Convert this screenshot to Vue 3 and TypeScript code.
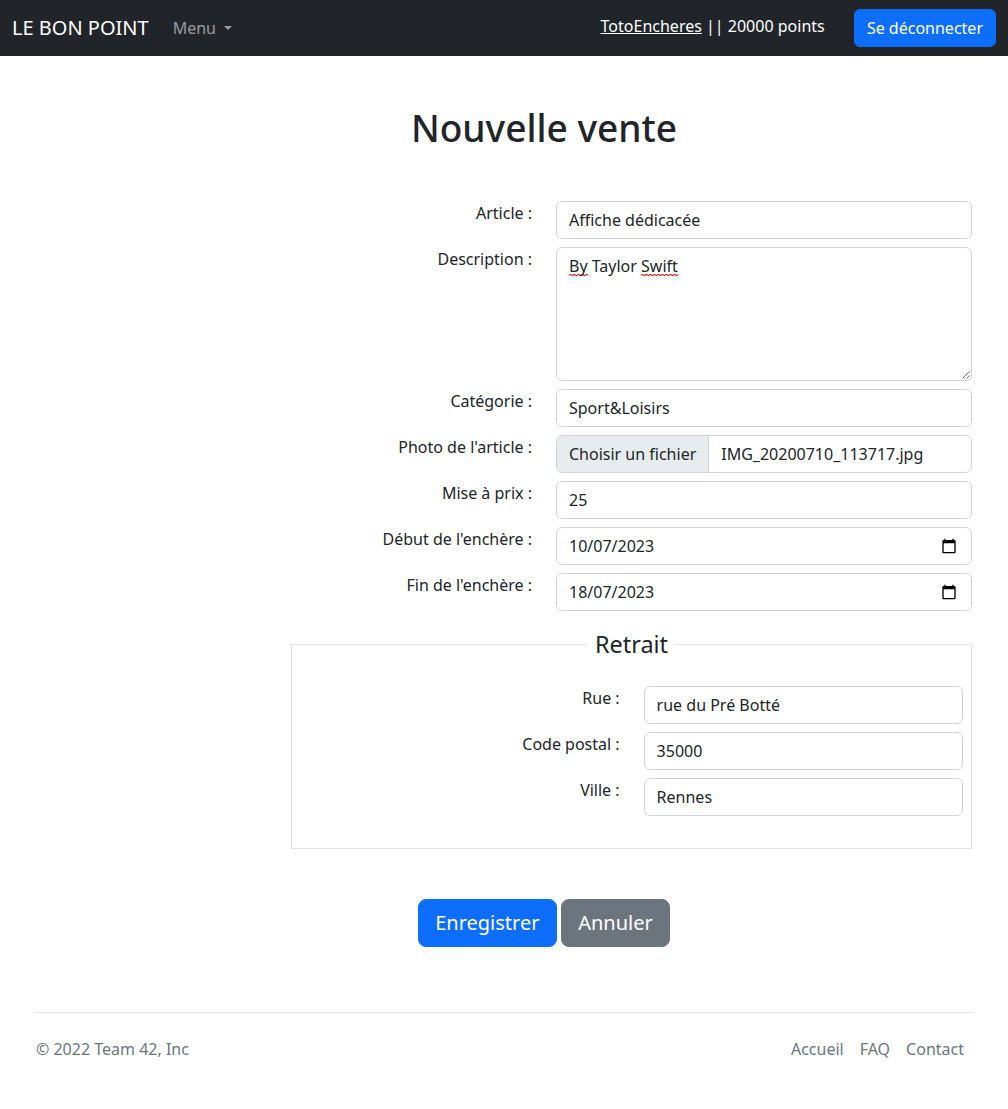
<script setup lang="ts">
interface Field {
  label: string
  value: string
  kind: 'text' | 'area' | 'file' | 'date'
}

const fields: Field[] = [
  { label: 'Article :', value: 'Affiche dédicacée', kind: 'text' },
  { label: 'Description :', value: '', kind: 'area' },
  { label: 'Catégorie :', value: 'Sport&Loisirs', kind: 'text' },
  { label: "Photo de l'article :", value: 'IMG_20200710_113717.jpg', kind: 'file' },
  { label: 'Mise à prix :', value: '25', kind: 'text' },
  { label: "Début de l'enchère :", value: '10/07/2023', kind: 'date' },
  { label: "Fin de l'enchère :", value: '18/07/2023', kind: 'date' },
]

const pickup = [
  { label: 'Rue :', value: 'rue du Pré Botté' },
  { label: 'Code postal :', value: '35000' },
  { label: 'Ville :', value: 'Rennes' },
]

const links = ['Accueil', 'FAQ', 'Contact']
</script>

<template>
  <div class="page">
    <nav class="navbar">
      <a class="brand">LE BON POINT</a>
      <a class="menu">Menu<span class="caret"></span></a>
      <span class="account"><a class="user">TotoEncheres</a> || 20000 points</span>
      <button class="btn logout">Se déconnecter</button>
    </nav>

    <main>
      <h1>Nouvelle vente</h1>
      <form>
        <div v-for="f in fields" :key="f.label" class="row">
          <label>{{ f.label }}</label>
          <div v-if="f.kind === 'area'" class="control area">
            <span class="typo">By</span> Taylor <span class="typo">Swift</span>
            <svg class="grip" width="8" height="8" viewBox="0 0 8 8">
              <path d="M0.5 7.5L7.5 0.5M4.5 7.5L7.5 4.5" stroke="#444" stroke-width="0.8" fill="none" />
            </svg>
          </div>
          <div v-else-if="f.kind === 'file'" class="control file">
            <span class="choose">Choisir un fichier</span>
            <span class="filename">{{ f.value }}</span>
          </div>
          <div v-else-if="f.kind === 'date'" class="control date">
            <span>{{ f.value }}</span>
            <svg width="16" height="16" viewBox="0 0 24 24">
              <path d="M20 3h-1V1h-2v2H7V1H5v2H4c-1.1 0-2 .9-2 2v16c0 1.1.9 2 2 2h16c1.1 0 2-.9 2-2V5c0-1.1-.9-2-2-2zm0 18H4V8h16v13z" />
            </svg>
          </div>
          <div v-else class="control">{{ f.value }}</div>
        </div>

        <fieldset>
          <legend>Retrait</legend>
          <div v-for="p in pickup" :key="p.label" class="row">
            <label>{{ p.label }}</label>
            <div class="control">{{ p.value }}</div>
          </div>
        </fieldset>
      </form>
      <div class="actions">
        <button class="btn large">Enregistrer</button>
        <button class="btn large grey">Annuler</button>
      </div>
    </main>

    <footer>
      <span>© 2022 Team 42, Inc</span>
      <div class="links"><a v-for="l in links" :key="l">{{ l }}</a></div>
    </footer>
  </div>
</template>

<style>
body {
  background: #fff;
}
</style>

<style scoped>
.page,
.page * {
  box-sizing: border-box;
}
.page {
  min-height: 1109px;
  font: 16px/24px 'Noto Sans', sans-serif;
  color: #212529;
}
.navbar {
  display: flex;
  align-items: center;
  height: 56px;
  padding: 0 12px;
  background: #212529;
  color: #fff;
}
.brand {
  font-size: 20px;
  line-height: 30px;
  margin-right: 24px;
}
.menu {
  color: rgba(255, 255, 255, 0.55);
}
.caret {
  display: inline-block;
  margin-left: 8px;
  vertical-align: 4px;
  border: 4.8px solid transparent;
  border-top-color: currentColor;
  border-bottom: 0;
}
.account {
  margin: 0 29.2px 4px auto;
}
.user {
  text-decoration: underline;
}
.btn {
  height: 38px;
  padding: 6px 12px;
  border: 1px solid #0d6efd;
  border-radius: 6px;
  background: #0d6efd;
  color: #fff;
  font: inherit;
}
.large {
  height: 48px;
  padding: 8px 16px;
  border-radius: 8px;
  font-size: 20px;
  line-height: 30px;
}
.grey {
  background: #6c757d;
  border-color: #6c757d;
}
main {
  padding: 48px 36px 0;
}
h1 {
  margin: 0 0 50px 80px;
  font-size: 37.12px;
  line-height: 47px;
  font-weight: 500;
  text-align: center;
}
form {
  margin-left: 255px;
}
.row {
  display: flex;
  margin-bottom: 8px;
}
label {
  flex: 1;
  padding-right: 24px;
  text-align: right;
}
.control {
  display: block;
  width: 416px;
  height: 38px;
  padding: 6px 12px;
  border: 1px solid #ced4da;
  border-radius: 6px;
  white-space: pre;
}
.area {
  position: relative;
  height: 134px;
  white-space: normal;
}
/* Spell-check squiggle: two one-pixel rows of offset dashes */
.typo {
  background:
    linear-gradient(90deg, #f66 1px, #f00 1px 2px, #f66 2px 3px, transparent 3px) 0 calc(100% - 2px) / 4px 1px repeat-x,
    linear-gradient(90deg, #f66 1px, transparent 1px 2px, #f66 2px 3px, #f00 3px) 0 calc(100% - 1px) / 4px 1px repeat-x;
}
.grip {
  position: absolute;
  right: 1px;
  bottom: 1px;
}
.file {
  display: flex;
  padding: 0;
  overflow: hidden;
}
.choose {
  padding: 6px 12px;
  border-right: 1px solid #ced4da;
  background: #e9ecef;
}
.filename {
  padding: 6px 12px;
}
.date {
  display: flex;
  align-items: center;
  justify-content: space-between;
  padding-right: 14px;
}
fieldset {
  min-width: 0;
  height: 221px;
  margin: 17px 0 0;
  padding: 25px 8px 0;
  border: 1px solid #dee2e6;
}
legend {
  margin: 0 auto;
  padding: 0 8px;
  font-size: 23.42px;
  line-height: 33px;
}
fieldset .control {
  width: 319.4px;
}
.actions {
  display: flex;
  justify-content: center;
  gap: 4.16px;
  margin: 50px 0 65px 80px;
}
.actions .btn {
  padding: 8px 16.3px;
}
footer {
  display: flex;
  justify-content: space-between;
  margin: 0 36px;
  padding: 24px 0;
  border-top: 1px solid #dee2e6;
  color: #6c757d;
}
.links {
  display: flex;
  gap: 16px;
  padding-right: 8px;
}
</style>
